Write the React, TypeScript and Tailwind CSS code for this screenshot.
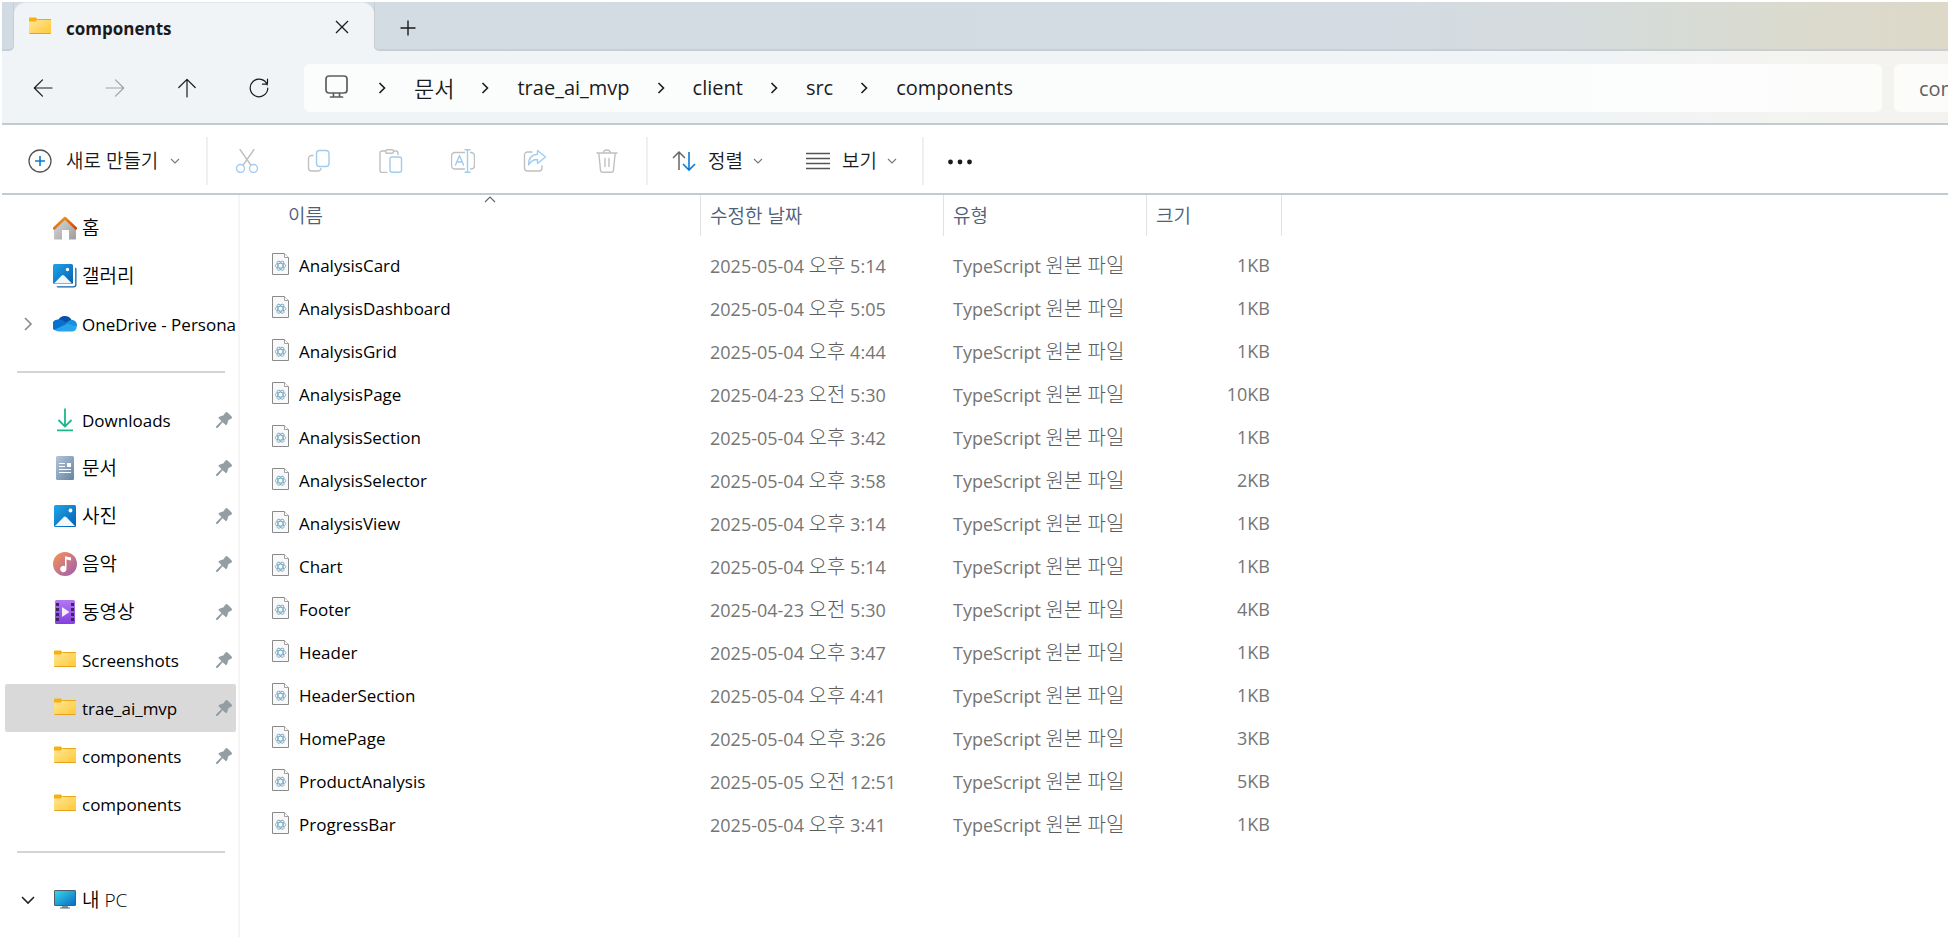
import type { ReactNode } from 'react';

const files: [string, string, string, string, string][] = [
  ['AnalysisCard', '2025-05-04', '오후', '5:14', '1KB'],
  ['AnalysisDashboard', '2025-05-04', '오후', '5:05', '1KB'],
  ['AnalysisGrid', '2025-05-04', '오후', '4:44', '1KB'],
  ['AnalysisPage', '2025-04-23', '오전', '5:30', '10KB'],
  ['AnalysisSection', '2025-05-04', '오후', '3:42', '1KB'],
  ['AnalysisSelector', '2025-05-04', '오후', '3:58', '2KB'],
  ['AnalysisView', '2025-05-04', '오후', '3:14', '1KB'],
  ['Chart', '2025-05-04', '오후', '5:14', '1KB'],
  ['Footer', '2025-04-23', '오전', '5:30', '4KB'],
  ['Header', '2025-05-04', '오후', '3:47', '1KB'],
  ['HeaderSection', '2025-05-04', '오후', '4:41', '1KB'],
  ['HomePage', '2025-05-04', '오후', '3:26', '3KB'],
  ['ProductAnalysis', '2025-05-05', '오전', '12:51', '5KB'],
  ['ProgressBar', '2025-05-04', '오후', '3:41', '1KB'],
];

const crumbs = ['문서', 'trae_ai_mvp', 'client', 'src', 'components'];

function Gradients() {
  return (
    <svg className="absolute size-0" aria-hidden="true">
      <defs>
        <linearGradient id="folder" x1="0" y1="0" x2="1" y2="1">
          <stop offset="0" stopColor="#ffe69a" />
          <stop offset="1" stopColor="#ffc935" />
        </linearGradient>
        <linearGradient id="blue" x1="0" y1="0" x2="1" y2="1">
          <stop offset="0" stopColor="#1fa5e8" />
          <stop offset="1" stopColor="#0560b4" />
        </linearGradient>
        <linearGradient id="roof" x1="0" y1="0" x2="1" y2="1">
          <stop offset="0" stopColor="#f8a01c" />
          <stop offset="1" stopColor="#cf4205" />
        </linearGradient>
        <linearGradient id="wall" x1="0" y1="0" x2="1" y2="1">
          <stop offset="0" stopColor="#dcdcdc" />
          <stop offset="1" stopColor="#9c9c9c" />
        </linearGradient>
        <linearGradient id="doc" x1="0" y1="0" x2="1" y2="1">
          <stop offset="0" stopColor="#b3c6d9" />
          <stop offset="1" stopColor="#6583a3" />
        </linearGradient>
        <linearGradient id="music" x1="0" y1="0" x2="1" y2="1">
          <stop offset="0.1" stopColor="#f18f5c" />
          <stop offset="1" stopColor="#9a5bb5" />
        </linearGradient>
        <linearGradient id="video" x1="0" y1="0" x2="0" y2="1">
          <stop offset="0" stopColor="#b377f2" />
          <stop offset="1" stopColor="#8440e0" />
        </linearGradient>
        <linearGradient id="screen" x1="0" y1="0" x2="1" y2="1">
          <stop offset="0" stopColor="#35dbe8" />
          <stop offset="1" stopColor="#0a68c2" />
        </linearGradient>
      </defs>
    </svg>
  );
}

function Icon({ children, className = 'size-6' }: { children: ReactNode; className?: string }) {
  return (
    <svg viewBox="0 0 24 24" fill="none" className={`${className} shrink-0`} aria-hidden="true">
      {children}
    </svg>
  );
}

const FolderIcon = () => (
  <Icon>
    <path d="M1 3.500a1 1 0 0 1 1-1h6l1.500 2-2 3H1z" fill="#f7b010" />
    <path d="M1 6.500h7l2-2.500H22a1 1 0 0 1 1 1v13a1 1 0 0 1-1 1H2a1 1 0 0 1-1-1z" fill="url(#folder)" />
    <path d="M9.500 4.500H23" stroke="#e9a912" />
    <path d="M1.500 18.500h21" stroke="#e8a21a" />
  </Icon>
);

const HomeIcon = () => (
  <Icon>
    <path d="M1 11 12 1.500 23 11v11.500a1 1 0 0 1-1 1h-6V14H9v9.500H2a1 1 0 0 1-1-1z" fill="url(#wall)" />
    <path d="M1 12.500 12 2l11 10.500" stroke="url(#roof)" strokeWidth="2.500" strokeLinecap="round" strokeLinejoin="round" />
  </Icon>
);

const GalleryIcon = () => (
  <Icon>
    <path d="M22.200 3.500a1.500 1.500 0 0 1 1.300 1.500v15.500a3 3 0 0 1-3 3H5a1.500 1.500 0 0 1-1.500-1.300h17a1.700 1.700 0 0 0 1.700-1.700z" fill="#1263ad" />
    <rect x="0" y="0" width="20" height="20" rx="1.500" fill="url(#blue)" />
    <path d="m1 19.500 7.500-7.700a2 2 0 0 1 2.800 0l7.700 7.700z" fill="#eef7ff" />
    <circle cx="14.500" cy="5.500" r="1.700" fill="#fff" />
  </Icon>
);

const PhotoIcon = () => (
  <Icon>
    <rect x="1" y="1" width="22" height="22" rx="1.500" fill="url(#blue)" />
    <path d="m2 22 8.600-8.700a2 2 0 0 1 2.800 0L22 22z" fill="#f1f8ff" />
    <circle cx="17.500" cy="6.500" r="1.900" fill="#fff" />
  </Icon>
);

const CloudIcon = () => (
  <Icon>
    <path d="M5 8.500a7.500 7.500 0 0 1 13.600-.3L12 13z" fill="#0a52a8" />
    <path d="M5.500 7.500a5.600 5.600 0 0 1 4 .8L18 14 2 18.300A5.800 5.800 0 0 1 5.500 7.500z" fill="#0a70cf" />
    <path d="M12.500 11 18 7.800a5.300 5.300 0 0 1 5.700 7L17 15z" fill="#1690df" />
    <path d="M1.500 17.700 14.500 11.500 23.800 14.800A4.800 4.800 0 0 1 19 19.500H6a6 6 0 0 1-4.500-1.800z" fill="#28a4ea" />
  </Icon>
);

const DownloadIcon = () => (
  <Icon>
    <path d="M12 .5v17M5.500 12l6.500 6.500 6.500-6.500M4 22.300h16" stroke="#1fb58d" strokeWidth="1.800" />
  </Icon>
);

const DocumentIcon = () => (
  <Icon>
    <rect x="3" y="0" width="18" height="24" rx="1.500" fill="url(#doc)" />
    <path d="M6 7.500h6M6 10.500h6M6 13.500h12M6 16.500h12" stroke="#fff" strokeWidth="1.200" />
    <rect x="14" y="7" width="4" height="4" fill="#fff" />
  </Icon>
);

const MusicIcon = () => (
  <Icon>
    <circle cx="12" cy="12" r="12" fill="url(#music)" />
    <path d="M12 4.200 18 5.500v3l-4.500-1V17a3.200 3.200 0 1 1-1.500-2.700z" fill="#fff" />
  </Icon>
);

const VideoIcon = () => (
  <Icon>
    <rect x="2" y="0" width="20" height="24" rx="1.500" fill="url(#video)" />
    {[3, 8, 13, 18].map((y) => (
      <g key={y} fill="#3f2463">
        <rect x="3" y={y} width="3" height="3" />
        <rect x="18" y={y} width="3" height="3" />
      </g>
    ))}
    <path d="M9 7v10l7.500-5z" fill="#f3eafd" />
  </Icon>
);

const ComputerIcon = () => (
  <Icon>
    <path d="M9 17h6v3H9z" fill="#8b979f" />
    <path d="M7 20h10" stroke="#5d6970" />
    <rect x="1.500" y="2.500" width="21" height="15" rx=".5" fill="url(#screen)" stroke="#4d5f69" />
  </Icon>
);

const PinIcon = () => (
  <svg viewBox="0 0 16 16" className="size-4 shrink-0" aria-label="고정됨" role="img">
    <path
      d="M9.800.6a1 1 0 0 1 1.400 0l4.200 4.200a1 1 0 0 1-.3 1.600l-3 1.400-1.300 4.100a.9.900 0 0 1-1.500.4L6.500 9.800 1.700 15.500.3 15.700l.2-1.400 5.300-5.200-2.500-2.500a.9.900 0 0 1 .4-1.500L7.800 3.600z"
      fill="#929da4"
      stroke="#929da4"
      strokeWidth=".8"
    />
  </svg>
);

const FileIcon = () => (
  <svg viewBox="0 0 17 22" fill="none" className="mb-1 h-[22px] w-[17px] shrink-0" aria-hidden="true">
    <path d="M.5.500h12l4 4v17H.5z" fill="#f9f9f9" stroke="#8a8a8a" />
    <path d="M12.500.500v4h4" stroke="#a0a0a0" fill="#fff" />
    <g stroke="#5e9cba" strokeWidth=".7">
      <ellipse cx="8.500" cy="12.700" rx="5.200" ry="2.300" />
      <ellipse cx="8.500" cy="12.700" rx="5.200" ry="2.300" transform="rotate(60 8.500 12.700)" />
      <ellipse cx="8.500" cy="12.700" rx="5.200" ry="2.300" transform="rotate(120 8.500 12.700)" />
    </g>
  </svg>
);

const Down = () => (
  <svg viewBox="0 0 10 6" fill="none" className="h-[6px] w-[10px] shrink-0" aria-hidden="true">
    <path d="m1 1 4 4 4-4" stroke="#777" strokeWidth="1.100" />
  </svg>
);

function NavButton({ label, disabled, children }: { label: string; disabled?: boolean; children: ReactNode }) {
  return (
    <button
      aria-label={label}
      disabled={disabled}
      className="flex h-12 w-18 shrink-0 items-center justify-center text-[#1b1b1b] disabled:text-[#a0a3a5]"
    >
      <svg viewBox="0 0 20 20" fill="none" stroke="currentColor" strokeWidth="1.200" strokeLinecap="round" strokeLinejoin="round" className="size-5" aria-hidden="true">
        {children}
      </svg>
    </button>
  );
}

function ToolButton({ label, children }: { label: string; children: ReactNode }) {
  return (
    <button aria-label={label} disabled className="flex h-12 w-18 shrink-0 items-center justify-center">
      <svg viewBox="0 0 24 24" fill="none" stroke="#c0c0c0" strokeWidth="1.400" strokeLinecap="round" strokeLinejoin="round" className="size-6" aria-hidden="true">
        {children}
      </svg>
    </button>
  );
}

type SideProps = {
  icon: ReactNode;
  label: string;
  korean?: boolean;
  pinned?: boolean;
  selected?: boolean;
  expander?: 'closed' | 'open';
};

function SideItem({ icon, label, korean, pinned, selected, expander }: SideProps) {
  return (
    <li>
      <a
        href="#"
        aria-current={selected ? 'page' : undefined}
        className={`flex h-12 items-center overflow-hidden rounded-xs pr-1 text-black ${selected ? 'bg-[#d9d9d9]' : ''}`}
      >
        <span className="flex w-12 shrink-0 pl-4">
          {expander === 'closed' && (
            <svg viewBox="0 0 14 14" fill="none" className="size-3.5" aria-hidden="true">
              <path d="m4 1 6 6-6 6" stroke="#8a8a8a" strokeWidth="1.600" />
            </svg>
          )}
          {expander === 'open' && (
            <svg viewBox="0 0 14 14" fill="none" className="size-3.5" aria-hidden="true">
              <path d="m1 4 6 6 6-6" stroke="#222" strokeWidth="1.600" />
            </svg>
          )}
        </span>
        {icon}
        <span className={`ml-[5px] flex-1 whitespace-nowrap ${korean ? 'text-[19px] font-[350]' : 'pt-0.5 text-[17px]'}`}>{label}</span>
        {pinned && <PinIcon />}
      </a>
    </li>
  );
}

const SideRule = () => (
  <li className="flex h-12 items-center pr-[11px] pl-3">
    <hr className="h-0.5 w-full border-0 bg-[#d4d4d4]" />
  </li>
);

function HeadCell({ children, first }: { children: ReactNode; first?: boolean }) {
  return (
    <th scope="col" className="h-[49px] p-0 text-left align-top font-[350]">
      <div
        className={`relative flex h-[41px] items-center border-r border-[#e2e2e2] pt-0.5 text-[19px] text-[#4c607a] ${first ? 'pl-12' : 'pl-[9px]'}`}
      >
        {children}
      </div>
    </th>
  );
}

export default function App() {
  return (
    <div className="flex min-h-screen flex-col overflow-hidden bg-white pt-0.5 pl-0.5 font-['Open_Sans','Noto_Sans_CJK_KR',sans-serif] text-[#1b1b1b]">
      <Gradients />
      <header>
        <div className="flex h-[49px] bg-[#f0f4f7]">
          <div className="w-3 rounded-br-[5px] border-r border-b-2 border-[#c6cfd6] bg-[#d2dbe4]" />
          <div className="w-[360px] bg-[linear-gradient(#d3dbe3_50%,#f0f4f7_50%)]">
            <div className="flex h-full items-center rounded-t-[12px] border-t border-[#e2e8ed] bg-[#f0f4f7] pr-5 pl-3.5">
              <FolderIcon />
              <span className="ml-3.5 flex-1 pt-1 text-[17px] font-bold">components</span>
              <button aria-label="탭 닫기" className="flex size-6 items-center justify-center">
                <svg viewBox="0 0 14 14" fill="none" className="size-3.5" aria-hidden="true">
                  <path d="m1 1 12 12M13 1 1 13" stroke="#1b1b1b" strokeWidth="1.300" />
                </svg>
              </button>
            </div>
          </div>
          <div className="flex flex-1 items-center rounded-bl-[5px] border-b-2 border-l border-[#c8ced3] bg-[linear-gradient(90deg,#d3dbe3_0%,#d4dbe2_65%,#d6dcdb_78%,#dbdacd_92%,#ddd8c8_100%)] pt-1 pl-[21px]">
            <button aria-label="새 탭" className="flex size-6 items-center justify-center">
              <svg viewBox="0 0 16 16" fill="none" className="size-4" aria-hidden="true">
                <path d="M8 .5v15M.5 8h15" stroke="#1b1b1b" strokeWidth="1.400" />
              </svg>
            </button>
          </div>
        </div>

        <div className="flex h-[74px] items-center border-b-2 border-[#c1ccd1] bg-[linear-gradient(90deg,#f0f4f7_0%,#f0f4f6_80%,#f4f3ef_94%)] pt-0.5 pl-[5px]">
          <NavButton label="뒤로">
            <path d="M19 10H1.500M9.500 1.800 1.300 10l8.200 8.200" />
          </NavButton>
          <NavButton label="앞으로" disabled>
            <path d="M1 10h17.500M10.500 1.800l8.200 8.200-8.200 8.200" />
          </NavButton>
          <NavButton label="위로">
            <path d="M10 19V1.500M1.800 9.500 10 1.300l8.200 8.200" />
          </NavButton>
          <NavButton label="새로 고침">
            <path d="M18.300 7A8.800 8.800 0 1 0 18.800 10M18.500 1.200V5a1.200 1.200 0 0 1-1.200 1.200H13.500" />
          </NavButton>
          <nav aria-label="주소" className="ml-[9px] flex h-12 flex-1 items-center rounded-md bg-[linear-gradient(90deg,#fbfdfd_80%,#fcfcfa_100%)] pl-[21px]">
            <svg viewBox="0 0 24 24" fill="none" stroke="#5d5d5d" strokeWidth="1.700" strokeLinecap="round" className="mr-0.5 mb-1 size-6" aria-hidden="true">
              <rect x="1" y="2" width="21" height="17" rx="3" />
              <path d="M8.500 19.500v3M14.500 19.500v3M5.500 23h12" />
            </svg>
            <ol className="flex items-center">
              {crumbs.map((name, i) => (
                <li key={name} className="flex items-center gap-7 pl-[27px]">
                  <svg viewBox="0 0 8 12" fill="none" className="h-3 w-2" aria-hidden="true">
                    <path d="m1.500 1 5 5-5 5" stroke="#1b1b1b" strokeWidth="1.600" />
                  </svg>
                  <a href="#" className={i === 0 ? 'text-[22px] font-[350]' : 'text-[20px]'}>
                    {name}
                  </a>
                </li>
              ))}
            </ol>
          </nav>
          <input
            type="text"
            aria-label="검색"
            placeholder="components 검색"
            className="ml-3 h-12 w-[54px] rounded-l-md bg-[#fcfcfa] pl-[25px] text-[20px] placeholder:text-[#606060]"
          />
        </div>

        <div role="toolbar" aria-label="명령" className="flex h-[70px] items-center border-b-2 border-[#c1ccd1] bg-white pt-1">
          <button className="flex h-12 w-[204px] items-center pl-[26px] text-[19px] font-[350]">
            <Icon>
              <circle cx="12" cy="12" r="11" stroke="#555" strokeWidth="1.300" />
              <path d="M12 7v10M7 12h10" stroke="#0b7ad6" strokeWidth="1.600" />
            </Icon>
            <span className="mr-3 ml-3.5">새로 만들기</span>
            <Down />
          </button>
          <div className="h-12 w-0.5 bg-[#efefef]" />
          <div className="flex w-[438px] pl-[3px]">
            <ToolButton label="잘라내기">
              <path d="M5 .5 15.800 16M19 .5 8.200 16" />
              <g stroke="#9fccf0">
                <circle cx="5.500" cy="19.500" r="4" />
                <circle cx="18.500" cy="19.500" r="4" />
              </g>
            </ToolButton>
            <ToolButton label="복사">
              <path d="M6 6.500H4.500a3 3 0 0 0-3 3v9.500a3 3 0 0 0 3 3h6.500a3 3 0 0 0 3-2.500" />
              <rect x="9.500" y="1.500" width="12.500" height="16" rx="3" stroke="#9fccf0" />
            </ToolButton>
            <ToolButton label="붙여넣기">
              <path d="M7 2H3a2 2 0 0 0-2 2v17.500a2 2 0 0 0 2 2h5M15 2h2a2 2 0 0 1 2 2v1.500" />
              <rect x="6.500" y=".7" width="8" height="3.500" rx="1.500" />
              <rect x="11" y="8" width="11.500" height="15.300" rx="2" stroke="#9fccf0" />
            </ToolButton>
            <ToolButton label="이름 바꾸기">
              <path d="M13.500 3.500H4a3.500 3.500 0 0 0-3.500 3.500v9.500A3.500 3.500 0 0 0 4 20h9.500M19.500 3.500a3.500 3.500 0 0 1 4 3.500v9.500a3.500 3.500 0 0 1-4 3.500" />
              <path d="m4.500 16 4-9.500 4 9.500M5.700 13h5.600M16.500.700v22.600M14 .7h5M14 23.300h5" stroke="#9fccf0" />
            </ToolButton>
            <ToolButton label="공유">
              <path d="M9 3H4.500a3 3 0 0 0-3 3v13a3 3 0 0 0 3 3H16a3 3 0 0 0 3-3v-2" />
              <path d="M14.500 1.500 22.500 8l-8 6.500v-4c-4 0-6.500 1-9 5.500 0-6 3-10.300 9-10.700z" stroke="#9fccf0" />
            </ToolButton>
            <ToolButton label="삭제">
              <path d="M2 4h20M8.500 4a3.500 3 0 0 1 7 0M3.800 4l1.700 17a2.300 2.300 0 0 0 2.300 2.200h8.400a2.300 2.300 0 0 0 2.300-2.200L20.200 4M10 9.500v8M14 9.500v8" />
            </ToolButton>
          </div>
          <div className="h-12 w-0.5 bg-[#efefef]" />
          <button className="flex h-12 w-[133px] items-center pl-6 text-[19px] font-[350]">
            <Icon>
              <path d="M7 21V3M1 9l6-6 6 6" stroke="#666" strokeWidth="1.500" />
              <path d="M17 3v18M11 15l6 6 6-6" stroke="#0b7ad6" strokeWidth="1.600" />
            </Icon>
            <span className="mr-2.5 ml-3">정렬</span>
            <Down />
          </button>
          <button className="flex h-12 w-[141px] items-center pl-[25px] text-[19px] font-[350]">
            <Icon>
              <path d="M0 4.500h24M0 9.500h24M0 14.500h24M0 19.500h24" stroke="#555" strokeWidth="1.400" />
            </Icon>
            <span className="mr-2.5 ml-3">보기</span>
            <Down />
          </button>
          <div className="h-12 w-0.5 bg-[#efefef]" />
          <button aria-label="자세히 보기" className="flex h-12 w-18 items-center justify-center">
            <Icon>
              <g fill="#1b1b1b">
                <circle cx="2.500" cy="13" r="2.400" />
                <circle cx="12" cy="13" r="2.400" />
                <circle cx="21.500" cy="13" r="2.400" />
              </g>
            </Icon>
          </button>
        </div>
      </header>

      <div className="flex flex-1">
        <aside className="w-[238px] shrink-0 border-r-2 border-[#f5f5f5] pt-[9px] pr-0.5 pl-[3px]">
          <ul>
            <SideItem icon={<HomeIcon />} label="홈" korean />
            <SideItem icon={<GalleryIcon />} label="갤러리" korean />
            <SideItem icon={<CloudIcon />} label="OneDrive - Personal" expander="closed" />
            <SideRule />
            <SideItem icon={<DownloadIcon />} label="Downloads" pinned />
            <SideItem icon={<DocumentIcon />} label="문서" korean pinned />
            <SideItem icon={<PhotoIcon />} label="사진" korean pinned />
            <SideItem icon={<MusicIcon />} label="음악" korean pinned />
            <SideItem icon={<VideoIcon />} label="동영상" korean pinned />
            <SideItem icon={<FolderIcon />} label="Screenshots" pinned />
            <SideItem icon={<FolderIcon />} label="trae_ai_mvp" pinned selected />
            <SideItem icon={<FolderIcon />} label="components" pinned />
            <SideItem icon={<FolderIcon />} label="components" />
            <SideRule />
            <SideItem icon={<ComputerIcon />} label="내 PC" korean expander="open" />
          </ul>
        </aside>

        <main className="flex-1">
          <table className="w-[1042px] table-fixed border-collapse">
            <colgroup>
              <col className="w-[461px]" />
              <col className="w-[243px]" />
              <col className="w-[203px]" />
              <col className="w-[135px]" />
            </colgroup>
            <thead>
              <tr>
                <HeadCell first>
                  이름
                  <svg viewBox="0 0 12 7" fill="none" className="absolute top-px left-[244px] h-[7px] w-3" aria-hidden="true">
                    <path d="m1 6 5-5 5 5" stroke="#666" strokeWidth="1.200" />
                  </svg>
                </HeadCell>
                <HeadCell>수정한 날짜</HeadCell>
                <HeadCell>유형</HeadCell>
                <HeadCell>크기</HeadCell>
              </tr>
            </thead>
            <tbody className="text-[18px] text-[#757575]">
              {files.map(([name, day, half, time, size]) => (
                <tr key={name} className="h-[43px]">
                  <td className="p-0 pl-8">
                    <div className="flex items-center gap-2.5 text-[17px] text-black">
                      <FileIcon />
                      {name}
                    </div>
                  </td>
                  <td className="p-0 pl-[9px]">
                    {day} <span className="text-[20px] font-light text-[#5c5c5c]">{half}</span> {time}
                  </td>
                  <td className="p-0 pl-[9px]">
                    TypeScript <span className="text-[20px] font-light text-[#5c5c5c]">원본 파일</span>
                  </td>
                  <td className="p-0 pr-3 text-right">{size}</td>
                </tr>
              ))}
            </tbody>
          </table>
        </main>
      </div>
    </div>
  );
}
